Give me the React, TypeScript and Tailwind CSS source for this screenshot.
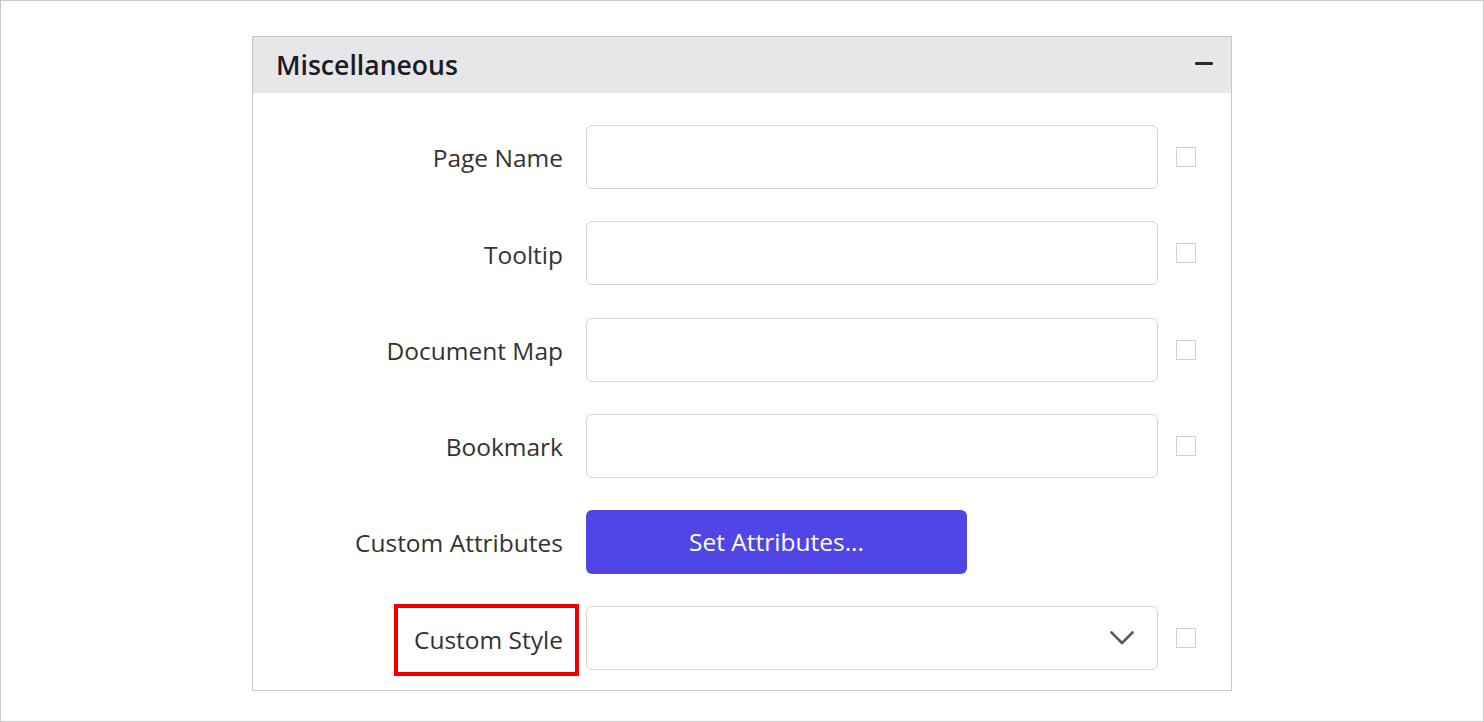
import React from "react";

const rows = ["Page Name", "Tooltip", "Document Map", "Bookmark"];

function Checkbox() {
  return <div className="w-[20px] h-[20px] border border-[#d0d0d0] bg-white" />;
}

export default function App() {
  return (
    <div
      className="w-[1484px] h-[722px] border border-[#c9c9c9] bg-white pt-[35px] pl-[251px]"
      style={{ fontFamily: '"Open Sans", "Noto Sans", sans-serif' }}
    >
      <div className="w-[980px] border border-[#c6c6c6] bg-white">
        <div className="h-[56px] bg-[#e7e7ea] flex items-center justify-between pl-[23px] pr-[18px]">
          <span className="text-[26.6px] font-semibold text-[#1b1b24] leading-none">
            Miscellaneous
          </span>
          <div className="w-[18px] h-[3px] bg-[#2a2a30] rounded-[1px] -mt-[3px]" />
        </div>
        <div className="pt-[32px] pb-[20px] flex flex-col gap-[32.25px]">
          {rows.map((r) => (
            <div key={r} className="flex items-center h-[64px]">
              <div className="w-[310px] text-right text-[24.5px] text-[#333333] leading-none pt-[3px]">{r}</div>
              <div className="ml-[23px] w-[572px] h-[64px] border border-[#d6d6d9] rounded-[6px] bg-white" />
              <div className="ml-[18px]">
                <Checkbox />
              </div>
            </div>
          ))}
          <div className="flex items-center h-[64px]">
            <div className="w-[310px] text-right text-[24.5px] text-[#333333] leading-none pt-[3px]">Custom Attributes</div>
            <button className="ml-[23px] w-[381px] h-[64px] rounded-[6px] bg-[#4f46e5] text-white text-[24.5px] leading-none flex items-center justify-center">
              Set Attributes...
            </button>
          </div>
          <div className="relative flex items-center h-[64px]">
            <div className="absolute left-[141px] top-[-2px] w-[185px] h-[72px] border-[4px] border-[#f00000]" />
            <div className="w-[310px] text-right text-[24.5px] text-[#333333] leading-none pt-[3px]">Custom Style</div>
            <div className="ml-[23px] w-[572px] h-[64px] border border-[#d6d6d9] rounded-[6px] bg-white flex items-center justify-end pr-[23px]">
              <svg width="24" height="14" viewBox="0 0 24 14" fill="none">
                <path d="M1.5 1.5 L12 12 L22.5 1.5" stroke="#5a5a64" strokeWidth="2.6" strokeLinecap="round" strokeLinejoin="round" />
              </svg>
            </div>
            <div className="ml-[18px]">
              <Checkbox />
            </div>
          </div>
        </div>
      </div>
    </div>
  );
}
